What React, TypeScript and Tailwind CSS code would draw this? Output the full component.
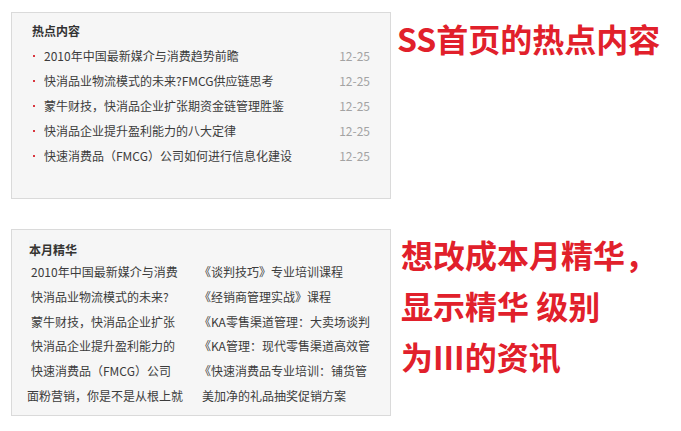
const hot = [
  '2010年中国最新媒介与消费趋势前瞻',
  '快消品业物流模式的未来?FMCG供应链思考',
  '蒙牛财技，快消品企业扩张期资金链管理胜鉴',
  '快消品企业提升盈利能力的八大定律',
  '快速消费品（FMCG）公司如何进行信息化建设',
];

// what is visible of each title in the two-column mock (the cells are narrow)
const left = [
  '2010年中国最新媒介与消费',
  '快消品业物流模式的未来?',
  '蒙牛财技，快消品企业扩张',
  '快消品企业提升盈利能力的',
  '快速消费品（FMCG）公司',
];

const right = [
  '《谈判技巧》专业培训课程',
  '《经销商管理实战》课程',
  '《KA零售渠道管理：大卖场谈判',
  '《KA管理：现代零售渠道高效管',
  '《快速消费品专业培训：铺货管',
];

const font = { fontFamily: '"Noto Sans CJK SC", "Noto Sans", sans-serif' };

export default function App() {
  return (
    <div className="flex h-[431px] w-[681px] bg-white text-[#3c3c3c]" style={font}>
      <div className="ml-[11px] flex w-[380px] flex-col">
        <HotBox />
        <BestBox />
      </div>
      <Notes />
    </div>
  );
}

// top panel: the current "hot content" list with dates
function HotBox() {
  return (
    <div className="mt-[12px] h-[187px] border border-[#dadada] bg-[#f6f6f6] pl-[20px] pr-[20px] pt-[8px]">
      <h3 className="h-[20px] text-[12px] font-bold leading-[20px] text-[#333]">热点内容</h3>
      <ul className="mt-[2px]">
        {hot.map((t) => (
          <li key={t} className="flex h-[25px] items-center text-[12px] leading-[25px]">
            <span className="ml-[1px] mr-[9px] h-[2px] w-[2px] shrink-0 bg-[#d9363e]" />
            <span className="flex-1 truncate">{t}</span>
            <span className="text-[#a3a3a3]">12-25</span>
          </li>
        ))}
      </ul>
    </div>
  );
}

// bottom panel: the two-column "best of the month" mock
function BestBox() {
  return (
    <div className="mt-[30px] h-[187px] border border-[#dadada] bg-[#f6f6f6] pl-[17px] pt-[10px]">
      <h3 className="h-[20px] w-fit bg-[#f0f3f6] pr-[2px] text-[12px] font-bold leading-[20px] text-[#333]">本月精华</h3>
      {left.map((t, i) => (
        <div key={t} className="flex h-[24.8px] items-center text-[12px] leading-[24.8px]">
          <span className="ml-[2px] w-[147px] shrink-0 whitespace-nowrap">{t}</span>
          <span className="ml-[21px] w-[169px] shrink-0 whitespace-nowrap">{right[i]}</span>
        </div>
      ))}
      <div className="flex h-[24.8px] items-center text-[12px] leading-[24.8px]">
        <span className="ml-[-2px] w-[156px] shrink-0 whitespace-nowrap">面粉营销，你是不是从根上就</span>
        <span className="ml-[19px] w-[169px] shrink-0 whitespace-nowrap">美加净的礼品抽奖促销方案</span>
      </div>
    </div>
  );
}

function Notes() {
  return (
    <div className="ml-[6px] flex flex-col font-bold text-[#e1202b]">
      <p className="mt-[22px] text-[32px] leading-[32px]">SS首页的热点内容</p>
      <div className="mt-[175px] text-[32px] leading-[51px]">
        <p className="ml-[4px]">想改成本月精华，</p>
        <p className="ml-[4px]">显示精华 级别</p>
        <p className="ml-[4px]">为III的资讯</p>
      </div>
    </div>
  );
}
